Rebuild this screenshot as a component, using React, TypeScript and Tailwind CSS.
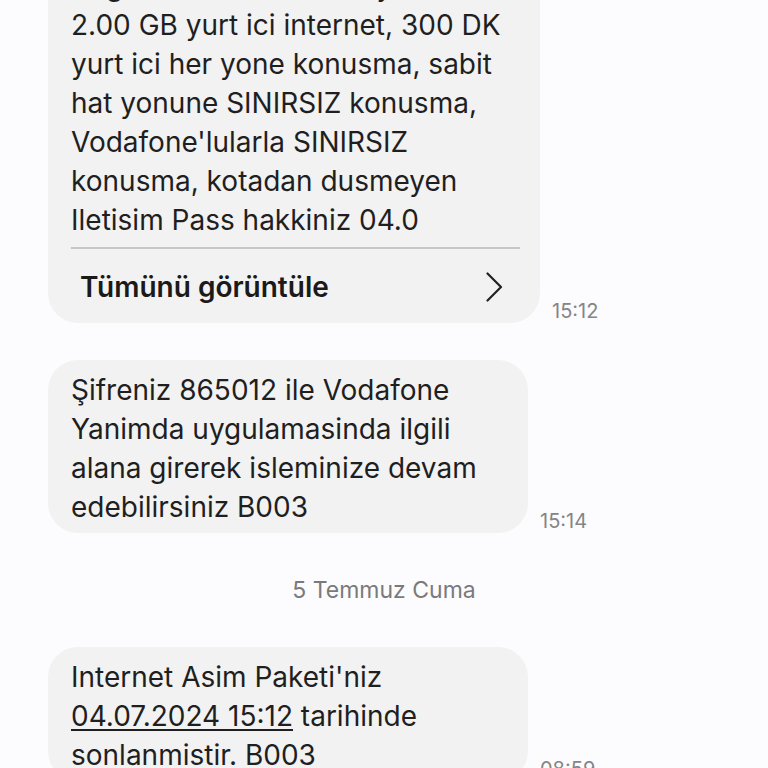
import React from "react";

const Time = ({ t }: { t: string }) => (
  <span className="shrink-0 text-[20px] leading-[24px] text-[#858585] font-['Inter',sans-serif]">{t}</span>
);

export default function App() {
  return (
    <div className="h-[768px] w-[768px] overflow-hidden bg-[#fcfcfe] font-['Inter',sans-serif] text-[#1f1f1f]">
      <div className="flex flex-col -mt-[44px]">
        {/* Message 1 */}
        <div className="flex items-end gap-[12px] pl-[48px]">
          <div className="w-[492px] rounded-[30px] bg-[#f2f2f2] pt-[11px] pb-[16px]">
            <div className="px-[23px] text-[28px] leading-[39px] whitespace-nowrap">
              <div>Bugun itibari ile kalan aylik</div>
              <div>2.00 GB yurt ici internet, 300 DK</div>
              <div>yurt ici her yone konusma, sabit</div>
              <div>hat yonune SINIRSIZ konusma,</div>
              <div>Vodafone'lularla SINIRSIZ</div>
              <div>konusma, kotadan dusmeyen</div>
              <div>Iletisim Pass hakkiniz 04.0</div>
            </div>
            <div className="ml-[23px] mr-[20px] mt-[7px] h-[1.5px] bg-[#c6c6c6]" />
            <div className="mt-[19px] flex items-center justify-between pl-[32px] pr-[37px]">
              <span className="text-[28px] leading-[39px] font-semibold text-[#1a1a1a]">Tümünü görüntüle</span>
              <svg width="18" height="30" viewBox="0 0 18 30" fill="none">
                <path d="M2.5 1.5 L16 15 L2.5 28.5" stroke="#222" strokeWidth="2.2" strokeLinecap="round" strokeLinejoin="round" />
              </svg>
            </div>
          </div>
          <Time t="15:12" />
        </div>

        {/* Message 2 */}
        <div className="mt-[37px] flex items-end gap-[12px] pl-[48px]">
          <div className="w-[480px] rounded-[30px] bg-[#f2f2f2] px-[23px] pt-[11px] pb-[6px] text-[28px] leading-[39px] whitespace-nowrap">
            <div>Şifreniz 865012 ile Vodafone</div>
            <div>Yanimda uygulamasinda ilgili</div>
            <div>alana girerek isleminize devam</div>
            <div>edebilirsiniz B003</div>
          </div>
          <Time t="15:14" />
        </div>

        {/* Date separator */}
        <div className="mt-[43px] text-center text-[23px] leading-[28px] text-[#7a7a7a]">5 Temmuz Cuma</div>

        {/* Message 3 */}
        <div className="mt-[43px] flex items-end gap-[12px] pl-[48px]">
          <div className="w-[480px] rounded-[30px] bg-[#f2f2f2] px-[23px] pt-[11px] pb-[6px] text-[28px] leading-[39px] whitespace-nowrap">
            <div>Internet Asim Paketi'niz</div>
            <div>
              <span className="underline decoration-[1.5px] underline-offset-[3px]">04.07.2024 15:12</span> tarihinde
            </div>
            <div>sonlanmistir. B003</div>
          </div>
          <Time t="08:59" />
        </div>
      </div>
    </div>
  );
}
